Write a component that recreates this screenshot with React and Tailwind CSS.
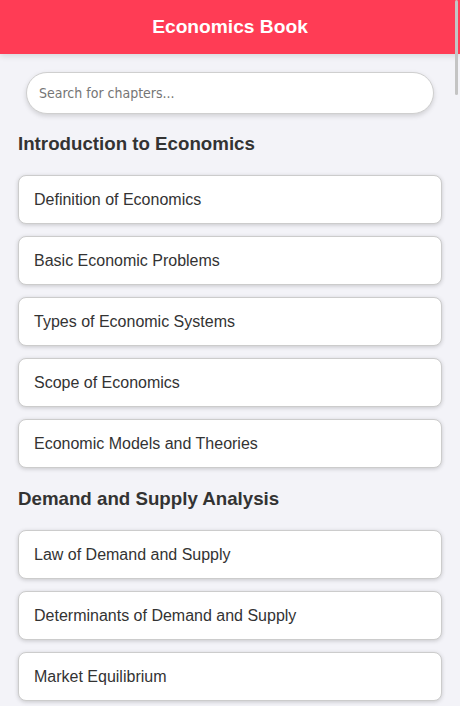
import React from 'react';

const sections = [
  {
    title: 'Introduction to Economics',
    chapters: [
      'Definition of Economics',
      'Basic Economic Problems',
      'Types of Economic Systems',
      'Scope of Economics',
      'Economic Models and Theories',
    ],
  },
  {
    title: 'Demand and Supply Analysis',
    chapters: [
      'Law of Demand and Supply',
      'Determinants of Demand and Supply',
      'Market Equilibrium',
    ],
  },
];

function ChapterCard({ name }) {
  return (
    <div className="h-[49px] flex items-center pl-[15px] pt-[1px] bg-white border border-[#cccccc] rounded-[8px] shadow-[0_1px_4px_rgba(0,0,0,0.18)] text-[16px] text-[#333]">
      {name}
    </div>
  );
}

export default function App() {
  return (
    <div className="min-h-screen bg-[#f3f3f8] font-['Liberation_Sans',Arial,sans-serif]">
      {/* Header */}
      <header className="h-[54px] bg-[#ff3c55] flex items-center justify-center shadow-[0_2px_6px_rgba(0,0,0,0.12)]">
        <h1 className="text-white font-bold text-[19.2px]">Economics Book</h1>
      </header>

      <main className="px-[18px] pb-6">
        {/* Search */}
        <div className="pt-[18px] px-[8px]">
          <input
            type="text"
            placeholder="Search for chapters..."
            className="w-full h-[42px] rounded-full bg-white border border-[#cfcfcf] shadow-[0_2px_5px_rgba(0,0,0,0.15)] px-[12px] text-[14px] [font-stretch:condensed] font-['DejaVu_Sans_Condensed','DejaVu_Sans',sans-serif] placeholder:text-[#757575] outline-none"
          />
        </div>

        {sections.map((section, i) => (
          <section key={section.title}>
            <h2
              className={
                i === 0
                  ? 'mt-[19px] mb-[20px] leading-[22px] text-[18.72px] font-bold text-[#333]'
                  : 'mt-[20px] mb-[20px] leading-[22px] text-[18.72px] font-bold text-[#333]'
              }
            >
              {section.title}
            </h2>
            <div className="flex flex-col gap-[12px]">
              {section.chapters.map((c) => (
                <ChapterCard key={c} name={c} />
              ))}
            </div>
          </section>
        ))}
      </main>

      {/* overlay scrollbar thumb */}
      <div className="fixed top-0 right-[2px] w-[3px] h-[95px] rounded-full bg-[#c4c4c4]" />
    </div>
  );
}
